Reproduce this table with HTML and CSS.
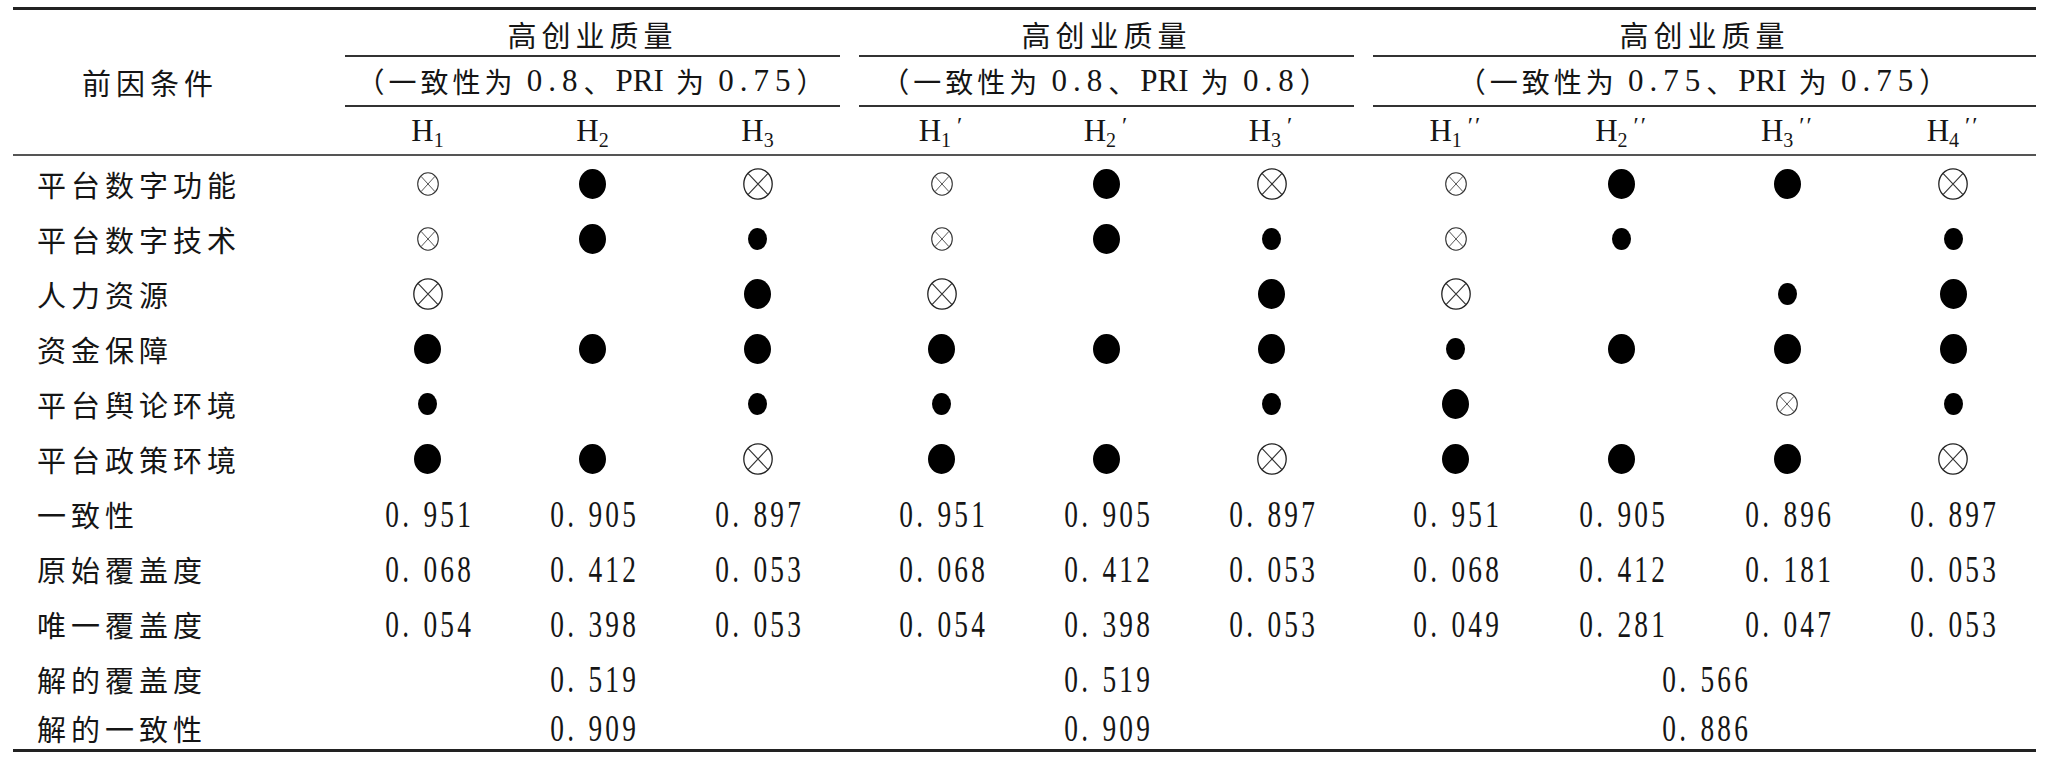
FILE: index.html
```html
<!DOCTYPE html>
<html lang="zh">
<head>
<meta charset="utf-8">
<link rel="stylesheet" href="styles.css">
</head>
<body>
<svg class="defs" aria-hidden="true">
  <symbol id="fl" viewBox="0 0 27 30"><ellipse cx="13.5" cy="15" rx="13.5" ry="15" fill="#000"/></symbol>
  <symbol id="fs" viewBox="0 0 19 22"><ellipse cx="9.5" cy="11" rx="9.5" ry="11" fill="#000"/></symbol>
  <symbol id="xl" viewBox="0 0 30 32"><ellipse cx="15" cy="16" rx="14.2" ry="15.2" fill="none" stroke="#222" stroke-width="1.3"/><path d="M5 5.3L25 26.7M25 5.3L5 26.7" stroke="#333" stroke-width="1.1" fill="none"/></symbol>
  <symbol id="xs" viewBox="0 0 22 24"><ellipse cx="11" cy="12" rx="10.3" ry="11.3" fill="none" stroke="#333" stroke-width="1.1"/><path d="M3.9 4.2L18.1 19.8M18.1 4.2L3.9 19.8" stroke="#444" stroke-width="0.9" fill="none"/></symbol>
</svg>

<div class="table">
  <div class="rule thick"></div>

  <div class="row head">
    <div class="label head-label">前因条件</div>
    <div class="groups">
      <div class="group g3">
        <div class="title">高创业质量</div>
        <div class="sub">（一致性为 <span class="lat">0.8</span>、<span class="lat pri">PRI</span> 为 <span class="lat">0.75</span>）</div>
        <div class="hs"><span class="h">H<sub>1</sub></span><span class="h">H<sub>2</sub></span><span class="h">H<sub>3</sub></span></div>
      </div>
      <div class="group g3">
        <div class="title">高创业质量</div>
        <div class="sub">（一致性为 <span class="lat">0.8</span>、<span class="lat pri">PRI</span> 为 <span class="lat">0.8</span>）</div>
        <div class="hs"><span class="h">H<sub>1</sub><i>′</i></span><span class="h">H<sub>2</sub><i>′</i></span><span class="h">H<sub>3</sub><i>′</i></span></div>
      </div>
      <div class="group g4">
        <div class="title">高创业质量</div>
        <div class="sub">（一致性为 <span class="lat">0.75</span>、<span class="lat pri">PRI</span> 为 <span class="lat">0.75</span>）</div>
        <div class="hs"><span class="h">H<sub>1</sub><i>′′</i></span><span class="h">H<sub>2</sub><i>′′</i></span><span class="h">H<sub>3</sub><i>′′</i></span><span class="h">H<sub>4</sub><i>′′</i></span></div>
      </div>
    </div>
  </div>

  <div class="rule mid"></div>

  <div class="row body">
    <div class="label">平台数字功能</div>
    <div class="groups">
      <div class="group g3 cells"><span><svg class="mk xs"><use href="#xs"/></svg></span><span><svg class="mk fl"><use href="#fl"/></svg></span><span><svg class="mk xl"><use href="#xl"/></svg></span></div>
      <div class="group g3 cells"><span><svg class="mk xs"><use href="#xs"/></svg></span><span><svg class="mk fl"><use href="#fl"/></svg></span><span><svg class="mk xl"><use href="#xl"/></svg></span></div>
      <div class="group g4 cells"><span><svg class="mk xs"><use href="#xs"/></svg></span><span><svg class="mk fl"><use href="#fl"/></svg></span><span><svg class="mk fl"><use href="#fl"/></svg></span><span><svg class="mk xl"><use href="#xl"/></svg></span></div>
    </div>
  </div>

  <div class="row body">
    <div class="label">平台数字技术</div>
    <div class="groups">
      <div class="group g3 cells"><span><svg class="mk xs"><use href="#xs"/></svg></span><span><svg class="mk fl"><use href="#fl"/></svg></span><span><svg class="mk fs"><use href="#fs"/></svg></span></div>
      <div class="group g3 cells"><span><svg class="mk xs"><use href="#xs"/></svg></span><span><svg class="mk fl"><use href="#fl"/></svg></span><span><svg class="mk fs"><use href="#fs"/></svg></span></div>
      <div class="group g4 cells"><span><svg class="mk xs"><use href="#xs"/></svg></span><span><svg class="mk fs"><use href="#fs"/></svg></span><span></span><span><svg class="mk fs"><use href="#fs"/></svg></span></div>
    </div>
  </div>

  <div class="row body">
    <div class="label">人力资源</div>
    <div class="groups">
      <div class="group g3 cells"><span><svg class="mk xl"><use href="#xl"/></svg></span><span></span><span><svg class="mk fl"><use href="#fl"/></svg></span></div>
      <div class="group g3 cells"><span><svg class="mk xl"><use href="#xl"/></svg></span><span></span><span><svg class="mk fl"><use href="#fl"/></svg></span></div>
      <div class="group g4 cells"><span><svg class="mk xl"><use href="#xl"/></svg></span><span></span><span><svg class="mk fs"><use href="#fs"/></svg></span><span><svg class="mk fl"><use href="#fl"/></svg></span></div>
    </div>
  </div>

  <div class="row body">
    <div class="label">资金保障</div>
    <div class="groups">
      <div class="group g3 cells"><span><svg class="mk fl"><use href="#fl"/></svg></span><span><svg class="mk fl"><use href="#fl"/></svg></span><span><svg class="mk fl"><use href="#fl"/></svg></span></div>
      <div class="group g3 cells"><span><svg class="mk fl"><use href="#fl"/></svg></span><span><svg class="mk fl"><use href="#fl"/></svg></span><span><svg class="mk fl"><use href="#fl"/></svg></span></div>
      <div class="group g4 cells"><span><svg class="mk fs"><use href="#fs"/></svg></span><span><svg class="mk fl"><use href="#fl"/></svg></span><span><svg class="mk fl"><use href="#fl"/></svg></span><span><svg class="mk fl"><use href="#fl"/></svg></span></div>
    </div>
  </div>

  <div class="row body">
    <div class="label">平台舆论环境</div>
    <div class="groups">
      <div class="group g3 cells"><span><svg class="mk fs"><use href="#fs"/></svg></span><span></span><span><svg class="mk fs"><use href="#fs"/></svg></span></div>
      <div class="group g3 cells"><span><svg class="mk fs"><use href="#fs"/></svg></span><span></span><span><svg class="mk fs"><use href="#fs"/></svg></span></div>
      <div class="group g4 cells"><span><svg class="mk fl"><use href="#fl"/></svg></span><span></span><span><svg class="mk xs"><use href="#xs"/></svg></span><span><svg class="mk fs"><use href="#fs"/></svg></span></div>
    </div>
  </div>

  <div class="row body">
    <div class="label">平台政策环境</div>
    <div class="groups">
      <div class="group g3 cells"><span><svg class="mk fl"><use href="#fl"/></svg></span><span><svg class="mk fl"><use href="#fl"/></svg></span><span><svg class="mk xl"><use href="#xl"/></svg></span></div>
      <div class="group g3 cells"><span><svg class="mk fl"><use href="#fl"/></svg></span><span><svg class="mk fl"><use href="#fl"/></svg></span><span><svg class="mk xl"><use href="#xl"/></svg></span></div>
      <div class="group g4 cells"><span><svg class="mk fl"><use href="#fl"/></svg></span><span><svg class="mk fl"><use href="#fl"/></svg></span><span><svg class="mk fl"><use href="#fl"/></svg></span><span><svg class="mk xl"><use href="#xl"/></svg></span></div>
    </div>
  </div>

  <div class="row body">
    <div class="label">一致性</div>
    <div class="groups">
      <div class="group g3 cells num"><span><b>0<i>.</i>951</b></span><span><b>0<i>.</i>905</b></span><span><b>0<i>.</i>897</b></span></div>
      <div class="group g3 cells num"><span><b>0<i>.</i>951</b></span><span><b>0<i>.</i>905</b></span><span><b>0<i>.</i>897</b></span></div>
      <div class="group g4 cells num"><span><b>0<i>.</i>951</b></span><span><b>0<i>.</i>905</b></span><span><b>0<i>.</i>896</b></span><span><b>0<i>.</i>897</b></span></div>
    </div>
  </div>

  <div class="row body">
    <div class="label">原始覆盖度</div>
    <div class="groups">
      <div class="group g3 cells num"><span><b>0<i>.</i>068</b></span><span><b>0<i>.</i>412</b></span><span><b>0<i>.</i>053</b></span></div>
      <div class="group g3 cells num"><span><b>0<i>.</i>068</b></span><span><b>0<i>.</i>412</b></span><span><b>0<i>.</i>053</b></span></div>
      <div class="group g4 cells num"><span><b>0<i>.</i>068</b></span><span><b>0<i>.</i>412</b></span><span><b>0<i>.</i>181</b></span><span><b>0<i>.</i>053</b></span></div>
    </div>
  </div>

  <div class="row body">
    <div class="label">唯一覆盖度</div>
    <div class="groups">
      <div class="group g3 cells num"><span><b>0<i>.</i>054</b></span><span><b>0<i>.</i>398</b></span><span><b>0<i>.</i>053</b></span></div>
      <div class="group g3 cells num"><span><b>0<i>.</i>054</b></span><span><b>0<i>.</i>398</b></span><span><b>0<i>.</i>053</b></span></div>
      <div class="group g4 cells num"><span><b>0<i>.</i>049</b></span><span><b>0<i>.</i>281</b></span><span><b>0<i>.</i>047</b></span><span><b>0<i>.</i>053</b></span></div>
    </div>
  </div>

  <div class="row body">
    <div class="label">解的覆盖度</div>
    <div class="groups">
      <div class="group g3 single num"><b>0<i>.</i>519</b></div>
      <div class="group g3 single num"><b>0<i>.</i>519</b></div>
      <div class="group g4 single num"><b>0<i>.</i>566</b></div>
    </div>
  </div>

  <div class="row body last">
    <div class="label">解的一致性</div>
    <div class="groups">
      <div class="group g3 single num"><b>0<i>.</i>909</b></div>
      <div class="group g3 single num"><b>0<i>.</i>909</b></div>
      <div class="group g4 single num"><b>0<i>.</i>886</b></div>
    </div>
  </div>

  <div class="rule thick"></div>
</div>
</body>
</html>
```

FILE: styles.css
```css
* { box-sizing: border-box; }

html, body {
  margin: 0;
  padding: 0;
  background: #fff;
}

body {
  padding: 7px 0 0 13px;
  color: #151515;
  font-family: "Noto Sans CJK SC", "Liberation Serif", serif;
  font-size: 29px;
  font-weight: 400;
}

.defs {
  position: absolute;
  width: 0;
  height: 0;
  overflow: hidden;
}

.table {
  width: 2023px;
}

.rule.thick {
  height: 3px;
  background: #222;
}

.rule.mid {
  height: 2px;
  background: #555;
}

.row {
  display: flex;
}

.label {
  width: 332px;
  flex: none;
  display: flex;
  align-items: center;
  padding-left: 24px;
  letter-spacing: 5px;
  white-space: nowrap;
}

.head-label {
  padding-left: 69px;
}

.groups {
  display: flex;
  gap: 19px;
}

.group.g3 { width: 495px; }
.group.g4 { width: 663px; }

.head .group {
  display: flex;
  flex-direction: column;
}

.title {
  height: 47px;
  display: flex;
  align-items: center;
  justify-content: center;
  letter-spacing: 5px;
  border-bottom: 2px solid #333;
  padding-top: 2px;
}

.sub {
  height: 50px;
  display: flex;
  align-items: center;
  justify-content: center;
  font-size: 28px;
  letter-spacing: 4px;
  border-bottom: 2px solid #333;
  white-space: pre;
}

.lat {
  font-family: "Liberation Serif", serif;
  font-size: 31px;
  letter-spacing: 6px;
}

.lat.pri {
  letter-spacing: 0;
  margin-right: 2px;
}

.hs {
  height: 47px;
  display: grid;
  align-items: center;
}

.g3 .hs, .g3.cells { grid-template-columns: repeat(3, 1fr); }
.g4 .hs, .g4.cells { grid-template-columns: repeat(4, 1fr); }

.h {
  font-family: "Liberation Serif", serif;
  font-size: 31px;
  text-align: center;
  white-space: nowrap;
}

.h sub {
  font-size: 20px;
  vertical-align: -6px;
  line-height: 0;
}

.h i {
  font-style: normal;
  font-size: 24px;
  vertical-align: 8px;
  line-height: 0;
  margin-left: 6px;
  letter-spacing: 2px;
}

.body {
  height: 55px;
}

.body.last {
  height: 43px;
}

.cells {
  display: grid;
  align-items: center;
  justify-items: center;
}

.cells > span {
  display: flex;
  align-items: center;
  justify-content: center;
}

.single {
  display: flex;
  align-items: center;
  justify-content: center;
}

.num b {
  display: inline-block;
  font-weight: 400;
  font-family: "Liberation Serif", serif;
  font-size: 38px;
  letter-spacing: 4.5px;
  transform: scaleX(0.72);
  margin: 0 -14px 0 -10px;
}

.num b i {
  font-style: normal;
  letter-spacing: 20px;
}

.mk { display: block; }
.mk.fl { width: 27px; height: 30px; }
.mk.fs { width: 19px; height: 22px; }
.mk.xl { width: 30px; height: 32px; }
.mk.xs { width: 22px; height: 24px; }
```
